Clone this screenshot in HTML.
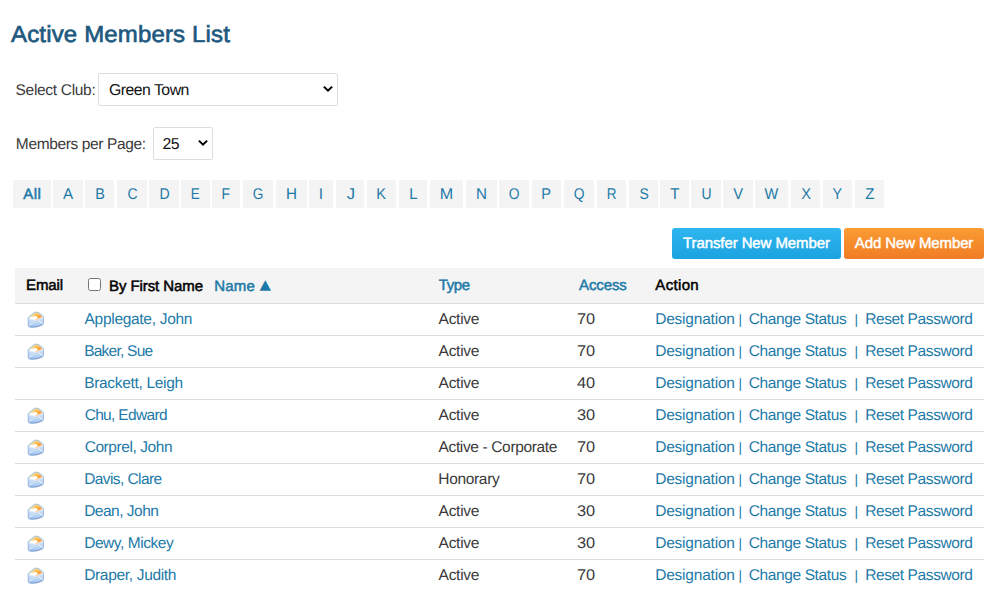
<!DOCTYPE html>
<html><head><meta charset="utf-8"><title>Active Members List</title>
<style>
*{box-sizing:border-box}
html,body{margin:0;padding:0;background:#fff}
body{text-rendering:geometricPrecision;width:1008px;height:591px;overflow:hidden;position:relative;font-family:"Liberation Sans",sans-serif;font-size:15px;color:#3a3a3a}
a{text-decoration:none}
.t{position:absolute;white-space:nowrap;display:block}
.sel{position:absolute;border:1px solid #dedede;border-radius:2px;background:#fff}
.chev{position:absolute}
.ab{position:absolute;top:180px;height:28px;background:#f4f4f4}
.btn{position:absolute;top:228px;height:31px;border-radius:3px}
.b1{left:672px;width:169px;background:linear-gradient(#2eb6f0,#1ba2e0)}
.b2{left:844px;width:140px;background:linear-gradient(#f99c33,#f17c25)}
.thead{position:absolute;left:15px;top:268px;width:969px;height:35px;background:#f4f4f4}
.ln{position:absolute;left:15px;width:969px;height:1px;background:#dedede}
.cb{position:absolute;left:88px;top:278px;width:13px;height:13px;border:1px solid #767676;border-radius:2.5px;background:#fff}
.ic{position:absolute;left:27px}
</style></head><body>

<h1 class="t" style="left:10.51px;top:20.21px;font-size:23.3px;line-height:28.3px;letter-spacing:0.156px;color:#20587f;-webkit-text-stroke:0.65px #20587f;margin:0;font-weight:normal;transform:scaleX(1.03);transform-origin:0 50%;">Active Members List</h1>
<span class="t" style="left:15.57px;top:81.00px;font-size:15.5px;line-height:20.5px;letter-spacing:-0.312px;color:#3a3a3a;">Select Club:</span>
<div class="sel" style="left:98px;top:73px;width:240px;height:33px"></div>
<span class="t" style="left:108.94px;top:81.01px;font-size:15.8px;line-height:20.8px;letter-spacing:-0.498px;color:#111;">Green Town</span>
<svg class="chev" style="left:322.9px;top:85px" width="10" height="8" viewBox="0 0 10 8"><path d="M0.9 1.6L5 5.7L9.1 1.6" fill="none" stroke="#000" stroke-width="2"/></svg>
<span class="t" style="left:15.85px;top:135.00px;font-size:15.5px;line-height:20.5px;letter-spacing:-0.367px;color:#3a3a3a;">Members per Page:</span>
<div class="sel" style="left:153px;top:127px;width:60px;height:33px"></div>
<span class="t" style="left:162.42px;top:135.01px;font-size:15.8px;line-height:20.8px;letter-spacing:-0.332px;color:#111;">25</span>
<svg class="chev" style="left:197.7px;top:139px" width="10" height="8" viewBox="0 0 10 8"><path d="M0.9 1.6L5 5.7L9.1 1.6" fill="none" stroke="#000" stroke-width="2"/></svg>
<div class="ab" style="left:13px;width:38px"></div>
<a class="t" style="left:23.25px;top:185.00px;font-size:15px;line-height:20px;letter-spacing:0.435px;color:#1d7aa8;-webkit-text-stroke:0.55px #1d7aa8;">All</a>
<div class="ab" style="left:53px;width:30px"></div>
<a class="t" style="left:62.81px;top:185.00px;font-size:15.5px;line-height:20.5px;letter-spacing:0.000px;color:#1d7aa8;transform:scaleX(0.98);">A</a>
<div class="ab" style="left:85px;width:29px"></div>
<a class="t" style="left:94.52px;top:185.00px;font-size:15.5px;line-height:20.5px;letter-spacing:0.000px;color:#1d7aa8;transform:scaleX(0.93);">B</a>
<div class="ab" style="left:117px;width:30px"></div>
<a class="t" style="left:126.78px;top:185.00px;font-size:15.5px;line-height:20.5px;letter-spacing:0.000px;color:#1d7aa8;transform:scaleX(0.9);">C</a>
<div class="ab" style="left:149px;width:30px"></div>
<a class="t" style="left:158.56px;top:185.00px;font-size:15.5px;line-height:20.5px;letter-spacing:0.000px;color:#1d7aa8;transform:scaleX(0.91);">D</a>
<div class="ab" style="left:181px;width:29px"></div>
<a class="t" style="left:190.11px;top:185.00px;font-size:15.5px;line-height:20.5px;letter-spacing:0.000px;color:#1d7aa8;transform:scaleX(0.87);">E</a>
<div class="ab" style="left:212px;width:28px"></div>
<a class="t" style="left:220.71px;top:185.00px;font-size:15.5px;line-height:20.5px;letter-spacing:0.000px;color:#1d7aa8;transform:scaleX(0.9);">F</a>
<div class="ab" style="left:243px;width:30px"></div>
<a class="t" style="left:251.78px;top:185.00px;font-size:15.5px;line-height:20.5px;letter-spacing:0.000px;color:#1d7aa8;transform:scaleX(0.88);">G</a>
<div class="ab" style="left:276px;width:31px"></div>
<a class="t" style="left:285.88px;top:185.00px;font-size:15.5px;line-height:20.5px;letter-spacing:0.000px;color:#1d7aa8;transform:scaleX(0.98);">H</a>
<div class="ab" style="left:309px;width:24px"></div>
<a class="t" style="left:318.75px;top:185.00px;font-size:15.5px;line-height:20.5px;letter-spacing:0.000px;color:#1d7aa8;transform:scaleX(1);">I</a>
<div class="ab" style="left:336px;width:28px"></div>
<a class="t" style="left:346.52px;top:185.00px;font-size:15.5px;line-height:20.5px;letter-spacing:0.000px;color:#1d7aa8;transform:scaleX(1.08);">J</a>
<div class="ab" style="left:367px;width:29px"></div>
<a class="t" style="left:375.78px;top:185.00px;font-size:15.5px;line-height:20.5px;letter-spacing:0.000px;color:#1d7aa8;transform:scaleX(0.94);">K</a>
<div class="ab" style="left:399px;width:28px"></div>
<a class="t" style="left:408.59px;top:185.00px;font-size:15.5px;line-height:20.5px;letter-spacing:0.000px;color:#1d7aa8;transform:scaleX(0.96);">L</a>
<div class="ab" style="left:430px;width:33px"></div>
<a class="t" style="left:440.06px;top:185.00px;font-size:15.5px;line-height:20.5px;letter-spacing:0.000px;color:#1d7aa8;transform:scaleX(1.04);">M</a>
<div class="ab" style="left:466px;width:31px"></div>
<a class="t" style="left:475.88px;top:185.00px;font-size:15.5px;line-height:20.5px;letter-spacing:0.000px;color:#1d7aa8;transform:scaleX(0.98);">N</a>
<div class="ab" style="left:499px;width:30px"></div>
<a class="t" style="left:508.03px;top:185.00px;font-size:15.5px;line-height:20.5px;letter-spacing:0.000px;color:#1d7aa8;transform:scaleX(0.89);">O</a>
<div class="ab" style="left:532px;width:29px"></div>
<a class="t" style="left:541.16px;top:185.00px;font-size:15.5px;line-height:20.5px;letter-spacing:0.000px;color:#1d7aa8;transform:scaleX(0.94);">P</a>
<div class="ab" style="left:564px;width:30px"></div>
<a class="t" style="left:573.03px;top:185.00px;font-size:15.5px;line-height:20.5px;letter-spacing:0.000px;color:#1d7aa8;transform:scaleX(0.89);">Q</a>
<div class="ab" style="left:597px;width:29px"></div>
<a class="t" style="left:605.77px;top:185.00px;font-size:15.5px;line-height:20.5px;letter-spacing:0.000px;color:#1d7aa8;transform:scaleX(0.87);">R</a>
<div class="ab" style="left:629px;width:29px"></div>
<a class="t" style="left:638.53px;top:185.00px;font-size:15.5px;line-height:20.5px;letter-spacing:0.000px;color:#1d7aa8;transform:scaleX(0.9);">S</a>
<div class="ab" style="left:660px;width:29px"></div>
<a class="t" style="left:669.67px;top:185.00px;font-size:15.5px;line-height:20.5px;letter-spacing:0.000px;color:#1d7aa8;transform:scaleX(0.97);">T</a>
<div class="ab" style="left:691px;width:30px"></div>
<a class="t" style="left:700.52px;top:185.00px;font-size:15.5px;line-height:20.5px;letter-spacing:0.000px;color:#1d7aa8;transform:scaleX(0.9);">U</a>
<div class="ab" style="left:723px;width:30px"></div>
<a class="t" style="left:732.85px;top:185.00px;font-size:15.5px;line-height:20.5px;letter-spacing:0.000px;color:#1d7aa8;transform:scaleX(0.95);">V</a>
<div class="ab" style="left:755px;width:33px"></div>
<a class="t" style="left:763.93px;top:185.00px;font-size:15.5px;line-height:20.5px;letter-spacing:0.000px;color:#1d7aa8;transform:scaleX(0.94);">W</a>
<div class="ab" style="left:791px;width:29px"></div>
<a class="t" style="left:800.67px;top:185.00px;font-size:15.5px;line-height:20.5px;letter-spacing:0.000px;color:#1d7aa8;transform:scaleX(0.94);">X</a>
<div class="ab" style="left:823px;width:29px"></div>
<a class="t" style="left:831.96px;top:185.00px;font-size:15.5px;line-height:20.5px;letter-spacing:0.000px;color:#1d7aa8;transform:scaleX(0.92);">Y</a>
<div class="ab" style="left:855px;width:29px"></div>
<a class="t" style="left:864.74px;top:185.00px;font-size:15.5px;line-height:20.5px;letter-spacing:0.000px;color:#1d7aa8;transform:scaleX(0.97);">Z</a>
<div class="btn b1"></div><div class="btn b2"></div>
<a class="t" style="left:683.00px;top:234.32px;font-size:15px;line-height:20px;letter-spacing:-0.092px;color:#fff;-webkit-text-stroke:0.45px #fff;">Transfer New Member</a>
<a class="t" style="left:854.81px;top:234.32px;font-size:15px;line-height:20px;letter-spacing:-0.114px;color:#fff;-webkit-text-stroke:0.45px #fff;">Add New Member</a>
<div class="thead"></div><div class="ln" style="top:303px"></div>
<span class="t" style="left:26.02px;top:275.71px;font-size:15px;line-height:20px;letter-spacing:-0.117px;color:#000;-webkit-text-stroke:0.5px #000;">Email</span>
<i class="cb"></i>
<span class="t" style="left:109.02px;top:277.01px;font-size:15px;line-height:20px;letter-spacing:-0.085px;color:#000;-webkit-text-stroke:0.5px #000;">By First Name</span>
<a class="t" style="left:214.35px;top:276.81px;font-size:15px;line-height:20px;letter-spacing:0.135px;color:#1d7aa8;-webkit-text-stroke:0.5px #1d7aa8;">Name</a>
<a class="t tri" style="left:258.8px;top:274.7px;font-family:&quot;DejaVu Sans&quot;,sans-serif;font-size:16px;line-height:20px;transform:scale(.93,.84);color:#1d7aa8">▲</a>
<a class="t" style="left:438.84px;top:275.81px;font-size:15px;line-height:20px;letter-spacing:-0.448px;color:#1d7aa8;-webkit-text-stroke:0.5px #1d7aa8;">Type</a>
<a class="t" style="left:578.97px;top:275.81px;font-size:15px;line-height:20px;letter-spacing:-0.097px;color:#1d7aa8;-webkit-text-stroke:0.5px #1d7aa8;">Access</a>
<span class="t" style="left:655.34px;top:275.81px;font-size:15px;line-height:20px;letter-spacing:0.337px;color:#000;-webkit-text-stroke:0.5px #000;">Action</span>
<div class="ln" style="top:335px"></div>
<svg class="ic" style="top:310.6px" width="18" height="18" viewBox="0 0 18 20" preserveAspectRatio="none"><defs><linearGradient id="g0" x1="0" y1="0" x2="0" y2="1"><stop offset="0.35" stop-color="#dbe8f9"/><stop offset="1" stop-color="#a3c8ef"/></linearGradient><linearGradient id="o0" x1="0" y1="0" x2="1" y2="1"><stop offset="0.15" stop-color="#fde274"/><stop offset="0.6" stop-color="#f8a93a"/><stop offset="1" stop-color="#ec8658"/></linearGradient></defs><path d="M1.2 7.4L4 4.6L7.6 1.7Q9.5 0.5 11.3 1.7L14.4 4L16.4 6.3L16.4 14.2L15.2 15.3L9.8 17.5L5 17.9L2.4 17.4L1.2 16.2z" fill="url(#g0)" stroke="#8aa6d4" stroke-width="0.8" stroke-linejoin="round"/><path d="M2.6 7.2L7.8 2.5Q9.5 1.4 11.1 2.5L15.5 6.4L9.6 10.6z" fill="url(#o0)"/><path d="M3.4 6.8C5.4 5.4 9.4 5.6 10.8 6.6L10.4 8.4L8 9.9L3.4 8.5z" fill="#fff"/><path d="M1.8 8.1L8.4 10.4L15.8 6.8M2 16.2L7.4 11.8M15.8 14L10.4 10.4" fill="none" stroke="#f2f7fe" stroke-width="0.9" opacity=".9"/><path d="M1.2 16.2L2.4 17.4L5 17.9L9.8 17.5L15.2 15.3L16.4 14.2" fill="none" stroke="#5f80c4" stroke-width="0.8" opacity=".8"/></svg>
<a class="t" style="left:84.55px;top:310.32px;font-size:15.5px;line-height:20.5px;letter-spacing:-0.298px;color:#1d7aa8;">Applegate, John</a>
<span class="t" style="left:438.55px;top:310.32px;font-size:15.5px;line-height:20.5px;letter-spacing:-0.260px;color:#3a3a3a;">Active</span>
<span class="t" style="left:577.00px;top:310.32px;font-size:15.5px;line-height:20.5px;letter-spacing:0.000px;color:#3a3a3a;transform:scaleX(1.055);transform-origin:0 50%;">70</span>
<a class="t" style="left:655.15px;top:310.32px;font-size:15.5px;line-height:20.5px;letter-spacing:-0.207px;color:#1d7aa8;">Designation</a>
<span class="t" style="left:738.38px;top:310.60px;font-size:13.6px;line-height:18.6px;letter-spacing:0.000px;color:#1d7aa8;">|</span>
<a class="t" style="left:748.81px;top:310.32px;font-size:15.5px;line-height:20.5px;letter-spacing:-0.391px;color:#1d7aa8;">Change Status</a>
<span class="t" style="left:854.38px;top:310.60px;font-size:13.6px;line-height:18.6px;letter-spacing:0.000px;color:#1d7aa8;">|</span>
<a class="t" style="left:865.15px;top:310.32px;font-size:15.5px;line-height:20.5px;letter-spacing:-0.390px;color:#1d7aa8;">Reset Password</a>
<div class="ln" style="top:367px"></div>
<svg class="ic" style="top:342.6px" width="18" height="18" viewBox="0 0 18 20" preserveAspectRatio="none"><defs><linearGradient id="g1" x1="0" y1="0" x2="0" y2="1"><stop offset="0.35" stop-color="#dbe8f9"/><stop offset="1" stop-color="#a3c8ef"/></linearGradient><linearGradient id="o1" x1="0" y1="0" x2="1" y2="1"><stop offset="0.15" stop-color="#fde274"/><stop offset="0.6" stop-color="#f8a93a"/><stop offset="1" stop-color="#ec8658"/></linearGradient></defs><path d="M1.2 7.4L4 4.6L7.6 1.7Q9.5 0.5 11.3 1.7L14.4 4L16.4 6.3L16.4 14.2L15.2 15.3L9.8 17.5L5 17.9L2.4 17.4L1.2 16.2z" fill="url(#g1)" stroke="#8aa6d4" stroke-width="0.8" stroke-linejoin="round"/><path d="M2.6 7.2L7.8 2.5Q9.5 1.4 11.1 2.5L15.5 6.4L9.6 10.6z" fill="url(#o1)"/><path d="M3.4 6.8C5.4 5.4 9.4 5.6 10.8 6.6L10.4 8.4L8 9.9L3.4 8.5z" fill="#fff"/><path d="M1.8 8.1L8.4 10.4L15.8 6.8M2 16.2L7.4 11.8M15.8 14L10.4 10.4" fill="none" stroke="#f2f7fe" stroke-width="0.9" opacity=".9"/><path d="M1.2 16.2L2.4 17.4L5 17.9L9.8 17.5L15.2 15.3L16.4 14.2" fill="none" stroke="#5f80c4" stroke-width="0.8" opacity=".8"/></svg>
<a class="t" style="left:84.15px;top:342.32px;font-size:15.5px;line-height:20.5px;letter-spacing:-0.753px;color:#1d7aa8;">Baker, Sue</a>
<span class="t" style="left:438.55px;top:342.32px;font-size:15.5px;line-height:20.5px;letter-spacing:-0.260px;color:#3a3a3a;">Active</span>
<span class="t" style="left:577.00px;top:342.32px;font-size:15.5px;line-height:20.5px;letter-spacing:0.000px;color:#3a3a3a;transform:scaleX(1.055);transform-origin:0 50%;">70</span>
<a class="t" style="left:655.15px;top:342.32px;font-size:15.5px;line-height:20.5px;letter-spacing:-0.207px;color:#1d7aa8;">Designation</a>
<span class="t" style="left:738.38px;top:342.60px;font-size:13.6px;line-height:18.6px;letter-spacing:0.000px;color:#1d7aa8;">|</span>
<a class="t" style="left:748.81px;top:342.32px;font-size:15.5px;line-height:20.5px;letter-spacing:-0.391px;color:#1d7aa8;">Change Status</a>
<span class="t" style="left:854.38px;top:342.60px;font-size:13.6px;line-height:18.6px;letter-spacing:0.000px;color:#1d7aa8;">|</span>
<a class="t" style="left:865.15px;top:342.32px;font-size:15.5px;line-height:20.5px;letter-spacing:-0.390px;color:#1d7aa8;">Reset Password</a>
<div class="ln" style="top:399px"></div>
<a class="t" style="left:84.15px;top:374.32px;font-size:15.5px;line-height:20.5px;letter-spacing:-0.318px;color:#1d7aa8;">Brackett, Leigh</a>
<span class="t" style="left:438.55px;top:374.32px;font-size:15.5px;line-height:20.5px;letter-spacing:-0.260px;color:#3a3a3a;">Active</span>
<span class="t" style="left:577.00px;top:374.32px;font-size:15.5px;line-height:20.5px;letter-spacing:0.000px;color:#3a3a3a;transform:scaleX(1.055);transform-origin:0 50%;">40</span>
<a class="t" style="left:655.15px;top:374.32px;font-size:15.5px;line-height:20.5px;letter-spacing:-0.207px;color:#1d7aa8;">Designation</a>
<span class="t" style="left:738.38px;top:374.60px;font-size:13.6px;line-height:18.6px;letter-spacing:0.000px;color:#1d7aa8;">|</span>
<a class="t" style="left:748.81px;top:374.32px;font-size:15.5px;line-height:20.5px;letter-spacing:-0.391px;color:#1d7aa8;">Change Status</a>
<span class="t" style="left:854.38px;top:374.60px;font-size:13.6px;line-height:18.6px;letter-spacing:0.000px;color:#1d7aa8;">|</span>
<a class="t" style="left:865.15px;top:374.32px;font-size:15.5px;line-height:20.5px;letter-spacing:-0.390px;color:#1d7aa8;">Reset Password</a>
<div class="ln" style="top:431px"></div>
<svg class="ic" style="top:406.6px" width="18" height="18" viewBox="0 0 18 20" preserveAspectRatio="none"><defs><linearGradient id="g3" x1="0" y1="0" x2="0" y2="1"><stop offset="0.35" stop-color="#dbe8f9"/><stop offset="1" stop-color="#a3c8ef"/></linearGradient><linearGradient id="o3" x1="0" y1="0" x2="1" y2="1"><stop offset="0.15" stop-color="#fde274"/><stop offset="0.6" stop-color="#f8a93a"/><stop offset="1" stop-color="#ec8658"/></linearGradient></defs><path d="M1.2 7.4L4 4.6L7.6 1.7Q9.5 0.5 11.3 1.7L14.4 4L16.4 6.3L16.4 14.2L15.2 15.3L9.8 17.5L5 17.9L2.4 17.4L1.2 16.2z" fill="url(#g3)" stroke="#8aa6d4" stroke-width="0.8" stroke-linejoin="round"/><path d="M2.6 7.2L7.8 2.5Q9.5 1.4 11.1 2.5L15.5 6.4L9.6 10.6z" fill="url(#o3)"/><path d="M3.4 6.8C5.4 5.4 9.4 5.6 10.8 6.6L10.4 8.4L8 9.9L3.4 8.5z" fill="#fff"/><path d="M1.8 8.1L8.4 10.4L15.8 6.8M2 16.2L7.4 11.8M15.8 14L10.4 10.4" fill="none" stroke="#f2f7fe" stroke-width="0.9" opacity=".9"/><path d="M1.2 16.2L2.4 17.4L5 17.9L9.8 17.5L15.2 15.3L16.4 14.2" fill="none" stroke="#5f80c4" stroke-width="0.8" opacity=".8"/></svg>
<a class="t" style="left:84.65px;top:406.32px;font-size:15.5px;line-height:20.5px;letter-spacing:-0.672px;color:#1d7aa8;">Chu, Edward</a>
<span class="t" style="left:438.55px;top:406.32px;font-size:15.5px;line-height:20.5px;letter-spacing:-0.260px;color:#3a3a3a;">Active</span>
<span class="t" style="left:577.00px;top:406.32px;font-size:15.5px;line-height:20.5px;letter-spacing:0.000px;color:#3a3a3a;transform:scaleX(1.055);transform-origin:0 50%;">30</span>
<a class="t" style="left:655.15px;top:406.32px;font-size:15.5px;line-height:20.5px;letter-spacing:-0.207px;color:#1d7aa8;">Designation</a>
<span class="t" style="left:738.38px;top:406.60px;font-size:13.6px;line-height:18.6px;letter-spacing:0.000px;color:#1d7aa8;">|</span>
<a class="t" style="left:748.81px;top:406.32px;font-size:15.5px;line-height:20.5px;letter-spacing:-0.391px;color:#1d7aa8;">Change Status</a>
<span class="t" style="left:854.38px;top:406.60px;font-size:13.6px;line-height:18.6px;letter-spacing:0.000px;color:#1d7aa8;">|</span>
<a class="t" style="left:865.15px;top:406.32px;font-size:15.5px;line-height:20.5px;letter-spacing:-0.390px;color:#1d7aa8;">Reset Password</a>
<div class="ln" style="top:463px"></div>
<svg class="ic" style="top:438.6px" width="18" height="18" viewBox="0 0 18 20" preserveAspectRatio="none"><defs><linearGradient id="g4" x1="0" y1="0" x2="0" y2="1"><stop offset="0.35" stop-color="#dbe8f9"/><stop offset="1" stop-color="#a3c8ef"/></linearGradient><linearGradient id="o4" x1="0" y1="0" x2="1" y2="1"><stop offset="0.15" stop-color="#fde274"/><stop offset="0.6" stop-color="#f8a93a"/><stop offset="1" stop-color="#ec8658"/></linearGradient></defs><path d="M1.2 7.4L4 4.6L7.6 1.7Q9.5 0.5 11.3 1.7L14.4 4L16.4 6.3L16.4 14.2L15.2 15.3L9.8 17.5L5 17.9L2.4 17.4L1.2 16.2z" fill="url(#g4)" stroke="#8aa6d4" stroke-width="0.8" stroke-linejoin="round"/><path d="M2.6 7.2L7.8 2.5Q9.5 1.4 11.1 2.5L15.5 6.4L9.6 10.6z" fill="url(#o4)"/><path d="M3.4 6.8C5.4 5.4 9.4 5.6 10.8 6.6L10.4 8.4L8 9.9L3.4 8.5z" fill="#fff"/><path d="M1.8 8.1L8.4 10.4L15.8 6.8M2 16.2L7.4 11.8M15.8 14L10.4 10.4" fill="none" stroke="#f2f7fe" stroke-width="0.9" opacity=".9"/><path d="M1.2 16.2L2.4 17.4L5 17.9L9.8 17.5L15.2 15.3L16.4 14.2" fill="none" stroke="#5f80c4" stroke-width="0.8" opacity=".8"/></svg>
<a class="t" style="left:84.65px;top:438.32px;font-size:15.5px;line-height:20.5px;letter-spacing:-0.425px;color:#1d7aa8;">Corprel, John</a>
<span class="t" style="left:438.55px;top:438.32px;font-size:15.5px;line-height:20.5px;letter-spacing:-0.360px;color:#3a3a3a;">Active - Corporate</span>
<span class="t" style="left:577.00px;top:438.32px;font-size:15.5px;line-height:20.5px;letter-spacing:0.000px;color:#3a3a3a;transform:scaleX(1.055);transform-origin:0 50%;">70</span>
<a class="t" style="left:655.15px;top:438.32px;font-size:15.5px;line-height:20.5px;letter-spacing:-0.207px;color:#1d7aa8;">Designation</a>
<span class="t" style="left:738.38px;top:438.60px;font-size:13.6px;line-height:18.6px;letter-spacing:0.000px;color:#1d7aa8;">|</span>
<a class="t" style="left:748.81px;top:438.32px;font-size:15.5px;line-height:20.5px;letter-spacing:-0.391px;color:#1d7aa8;">Change Status</a>
<span class="t" style="left:854.38px;top:438.60px;font-size:13.6px;line-height:18.6px;letter-spacing:0.000px;color:#1d7aa8;">|</span>
<a class="t" style="left:865.15px;top:438.32px;font-size:15.5px;line-height:20.5px;letter-spacing:-0.390px;color:#1d7aa8;">Reset Password</a>
<div class="ln" style="top:495px"></div>
<svg class="ic" style="top:470.6px" width="18" height="18" viewBox="0 0 18 20" preserveAspectRatio="none"><defs><linearGradient id="g5" x1="0" y1="0" x2="0" y2="1"><stop offset="0.35" stop-color="#dbe8f9"/><stop offset="1" stop-color="#a3c8ef"/></linearGradient><linearGradient id="o5" x1="0" y1="0" x2="1" y2="1"><stop offset="0.15" stop-color="#fde274"/><stop offset="0.6" stop-color="#f8a93a"/><stop offset="1" stop-color="#ec8658"/></linearGradient></defs><path d="M1.2 7.4L4 4.6L7.6 1.7Q9.5 0.5 11.3 1.7L14.4 4L16.4 6.3L16.4 14.2L15.2 15.3L9.8 17.5L5 17.9L2.4 17.4L1.2 16.2z" fill="url(#g5)" stroke="#8aa6d4" stroke-width="0.8" stroke-linejoin="round"/><path d="M2.6 7.2L7.8 2.5Q9.5 1.4 11.1 2.5L15.5 6.4L9.6 10.6z" fill="url(#o5)"/><path d="M3.4 6.8C5.4 5.4 9.4 5.6 10.8 6.6L10.4 8.4L8 9.9L3.4 8.5z" fill="#fff"/><path d="M1.8 8.1L8.4 10.4L15.8 6.8M2 16.2L7.4 11.8M15.8 14L10.4 10.4" fill="none" stroke="#f2f7fe" stroke-width="0.9" opacity=".9"/><path d="M1.2 16.2L2.4 17.4L5 17.9L9.8 17.5L15.2 15.3L16.4 14.2" fill="none" stroke="#5f80c4" stroke-width="0.8" opacity=".8"/></svg>
<a class="t" style="left:84.15px;top:470.32px;font-size:15.5px;line-height:20.5px;letter-spacing:-0.583px;color:#1d7aa8;">Davis, Clare</a>
<span class="t" style="left:438.31px;top:470.32px;font-size:15.5px;line-height:20.5px;letter-spacing:-0.333px;color:#3a3a3a;">Honorary</span>
<span class="t" style="left:577.00px;top:470.32px;font-size:15.5px;line-height:20.5px;letter-spacing:0.000px;color:#3a3a3a;transform:scaleX(1.055);transform-origin:0 50%;">70</span>
<a class="t" style="left:655.15px;top:470.32px;font-size:15.5px;line-height:20.5px;letter-spacing:-0.207px;color:#1d7aa8;">Designation</a>
<span class="t" style="left:738.38px;top:470.60px;font-size:13.6px;line-height:18.6px;letter-spacing:0.000px;color:#1d7aa8;">|</span>
<a class="t" style="left:748.81px;top:470.32px;font-size:15.5px;line-height:20.5px;letter-spacing:-0.391px;color:#1d7aa8;">Change Status</a>
<span class="t" style="left:854.38px;top:470.60px;font-size:13.6px;line-height:18.6px;letter-spacing:0.000px;color:#1d7aa8;">|</span>
<a class="t" style="left:865.15px;top:470.32px;font-size:15.5px;line-height:20.5px;letter-spacing:-0.390px;color:#1d7aa8;">Reset Password</a>
<div class="ln" style="top:527px"></div>
<svg class="ic" style="top:502.6px" width="18" height="18" viewBox="0 0 18 20" preserveAspectRatio="none"><defs><linearGradient id="g6" x1="0" y1="0" x2="0" y2="1"><stop offset="0.35" stop-color="#dbe8f9"/><stop offset="1" stop-color="#a3c8ef"/></linearGradient><linearGradient id="o6" x1="0" y1="0" x2="1" y2="1"><stop offset="0.15" stop-color="#fde274"/><stop offset="0.6" stop-color="#f8a93a"/><stop offset="1" stop-color="#ec8658"/></linearGradient></defs><path d="M1.2 7.4L4 4.6L7.6 1.7Q9.5 0.5 11.3 1.7L14.4 4L16.4 6.3L16.4 14.2L15.2 15.3L9.8 17.5L5 17.9L2.4 17.4L1.2 16.2z" fill="url(#g6)" stroke="#8aa6d4" stroke-width="0.8" stroke-linejoin="round"/><path d="M2.6 7.2L7.8 2.5Q9.5 1.4 11.1 2.5L15.5 6.4L9.6 10.6z" fill="url(#o6)"/><path d="M3.4 6.8C5.4 5.4 9.4 5.6 10.8 6.6L10.4 8.4L8 9.9L3.4 8.5z" fill="#fff"/><path d="M1.8 8.1L8.4 10.4L15.8 6.8M2 16.2L7.4 11.8M15.8 14L10.4 10.4" fill="none" stroke="#f2f7fe" stroke-width="0.9" opacity=".9"/><path d="M1.2 16.2L2.4 17.4L5 17.9L9.8 17.5L15.2 15.3L16.4 14.2" fill="none" stroke="#5f80c4" stroke-width="0.8" opacity=".8"/></svg>
<a class="t" style="left:84.15px;top:502.32px;font-size:15.5px;line-height:20.5px;letter-spacing:-0.494px;color:#1d7aa8;">Dean, John</a>
<span class="t" style="left:438.55px;top:502.32px;font-size:15.5px;line-height:20.5px;letter-spacing:-0.260px;color:#3a3a3a;">Active</span>
<span class="t" style="left:577.00px;top:502.32px;font-size:15.5px;line-height:20.5px;letter-spacing:0.000px;color:#3a3a3a;transform:scaleX(1.055);transform-origin:0 50%;">30</span>
<a class="t" style="left:655.15px;top:502.32px;font-size:15.5px;line-height:20.5px;letter-spacing:-0.207px;color:#1d7aa8;">Designation</a>
<span class="t" style="left:738.38px;top:502.60px;font-size:13.6px;line-height:18.6px;letter-spacing:0.000px;color:#1d7aa8;">|</span>
<a class="t" style="left:748.81px;top:502.32px;font-size:15.5px;line-height:20.5px;letter-spacing:-0.391px;color:#1d7aa8;">Change Status</a>
<span class="t" style="left:854.38px;top:502.60px;font-size:13.6px;line-height:18.6px;letter-spacing:0.000px;color:#1d7aa8;">|</span>
<a class="t" style="left:865.15px;top:502.32px;font-size:15.5px;line-height:20.5px;letter-spacing:-0.390px;color:#1d7aa8;">Reset Password</a>
<div class="ln" style="top:559px"></div>
<svg class="ic" style="top:534.6px" width="18" height="18" viewBox="0 0 18 20" preserveAspectRatio="none"><defs><linearGradient id="g7" x1="0" y1="0" x2="0" y2="1"><stop offset="0.35" stop-color="#dbe8f9"/><stop offset="1" stop-color="#a3c8ef"/></linearGradient><linearGradient id="o7" x1="0" y1="0" x2="1" y2="1"><stop offset="0.15" stop-color="#fde274"/><stop offset="0.6" stop-color="#f8a93a"/><stop offset="1" stop-color="#ec8658"/></linearGradient></defs><path d="M1.2 7.4L4 4.6L7.6 1.7Q9.5 0.5 11.3 1.7L14.4 4L16.4 6.3L16.4 14.2L15.2 15.3L9.8 17.5L5 17.9L2.4 17.4L1.2 16.2z" fill="url(#g7)" stroke="#8aa6d4" stroke-width="0.8" stroke-linejoin="round"/><path d="M2.6 7.2L7.8 2.5Q9.5 1.4 11.1 2.5L15.5 6.4L9.6 10.6z" fill="url(#o7)"/><path d="M3.4 6.8C5.4 5.4 9.4 5.6 10.8 6.6L10.4 8.4L8 9.9L3.4 8.5z" fill="#fff"/><path d="M1.8 8.1L8.4 10.4L15.8 6.8M2 16.2L7.4 11.8M15.8 14L10.4 10.4" fill="none" stroke="#f2f7fe" stroke-width="0.9" opacity=".9"/><path d="M1.2 16.2L2.4 17.4L5 17.9L9.8 17.5L15.2 15.3L16.4 14.2" fill="none" stroke="#5f80c4" stroke-width="0.8" opacity=".8"/></svg>
<a class="t" style="left:84.15px;top:534.32px;font-size:15.5px;line-height:20.5px;letter-spacing:-0.448px;color:#1d7aa8;">Dewy, Mickey</a>
<span class="t" style="left:438.55px;top:534.32px;font-size:15.5px;line-height:20.5px;letter-spacing:-0.260px;color:#3a3a3a;">Active</span>
<span class="t" style="left:577.00px;top:534.32px;font-size:15.5px;line-height:20.5px;letter-spacing:0.000px;color:#3a3a3a;transform:scaleX(1.055);transform-origin:0 50%;">30</span>
<a class="t" style="left:655.15px;top:534.32px;font-size:15.5px;line-height:20.5px;letter-spacing:-0.207px;color:#1d7aa8;">Designation</a>
<span class="t" style="left:738.38px;top:534.60px;font-size:13.6px;line-height:18.6px;letter-spacing:0.000px;color:#1d7aa8;">|</span>
<a class="t" style="left:748.81px;top:534.32px;font-size:15.5px;line-height:20.5px;letter-spacing:-0.391px;color:#1d7aa8;">Change Status</a>
<span class="t" style="left:854.38px;top:534.60px;font-size:13.6px;line-height:18.6px;letter-spacing:0.000px;color:#1d7aa8;">|</span>
<a class="t" style="left:865.15px;top:534.32px;font-size:15.5px;line-height:20.5px;letter-spacing:-0.390px;color:#1d7aa8;">Reset Password</a>
<svg class="ic" style="top:566.6px" width="18" height="18" viewBox="0 0 18 20" preserveAspectRatio="none"><defs><linearGradient id="g8" x1="0" y1="0" x2="0" y2="1"><stop offset="0.35" stop-color="#dbe8f9"/><stop offset="1" stop-color="#a3c8ef"/></linearGradient><linearGradient id="o8" x1="0" y1="0" x2="1" y2="1"><stop offset="0.15" stop-color="#fde274"/><stop offset="0.6" stop-color="#f8a93a"/><stop offset="1" stop-color="#ec8658"/></linearGradient></defs><path d="M1.2 7.4L4 4.6L7.6 1.7Q9.5 0.5 11.3 1.7L14.4 4L16.4 6.3L16.4 14.2L15.2 15.3L9.8 17.5L5 17.9L2.4 17.4L1.2 16.2z" fill="url(#g8)" stroke="#8aa6d4" stroke-width="0.8" stroke-linejoin="round"/><path d="M2.6 7.2L7.8 2.5Q9.5 1.4 11.1 2.5L15.5 6.4L9.6 10.6z" fill="url(#o8)"/><path d="M3.4 6.8C5.4 5.4 9.4 5.6 10.8 6.6L10.4 8.4L8 9.9L3.4 8.5z" fill="#fff"/><path d="M1.8 8.1L8.4 10.4L15.8 6.8M2 16.2L7.4 11.8M15.8 14L10.4 10.4" fill="none" stroke="#f2f7fe" stroke-width="0.9" opacity=".9"/><path d="M1.2 16.2L2.4 17.4L5 17.9L9.8 17.5L15.2 15.3L16.4 14.2" fill="none" stroke="#5f80c4" stroke-width="0.8" opacity=".8"/></svg>
<a class="t" style="left:84.15px;top:566.32px;font-size:15.5px;line-height:20.5px;letter-spacing:-0.320px;color:#1d7aa8;">Draper, Judith</a>
<span class="t" style="left:438.55px;top:566.32px;font-size:15.5px;line-height:20.5px;letter-spacing:-0.260px;color:#3a3a3a;">Active</span>
<span class="t" style="left:577.00px;top:566.32px;font-size:15.5px;line-height:20.5px;letter-spacing:0.000px;color:#3a3a3a;transform:scaleX(1.055);transform-origin:0 50%;">70</span>
<a class="t" style="left:655.15px;top:566.32px;font-size:15.5px;line-height:20.5px;letter-spacing:-0.207px;color:#1d7aa8;">Designation</a>
<span class="t" style="left:738.38px;top:566.60px;font-size:13.6px;line-height:18.6px;letter-spacing:0.000px;color:#1d7aa8;">|</span>
<a class="t" style="left:748.81px;top:566.32px;font-size:15.5px;line-height:20.5px;letter-spacing:-0.391px;color:#1d7aa8;">Change Status</a>
<span class="t" style="left:854.38px;top:566.60px;font-size:13.6px;line-height:18.6px;letter-spacing:0.000px;color:#1d7aa8;">|</span>
<a class="t" style="left:865.15px;top:566.32px;font-size:15.5px;line-height:20.5px;letter-spacing:-0.390px;color:#1d7aa8;">Reset Password</a>
</body></html>
